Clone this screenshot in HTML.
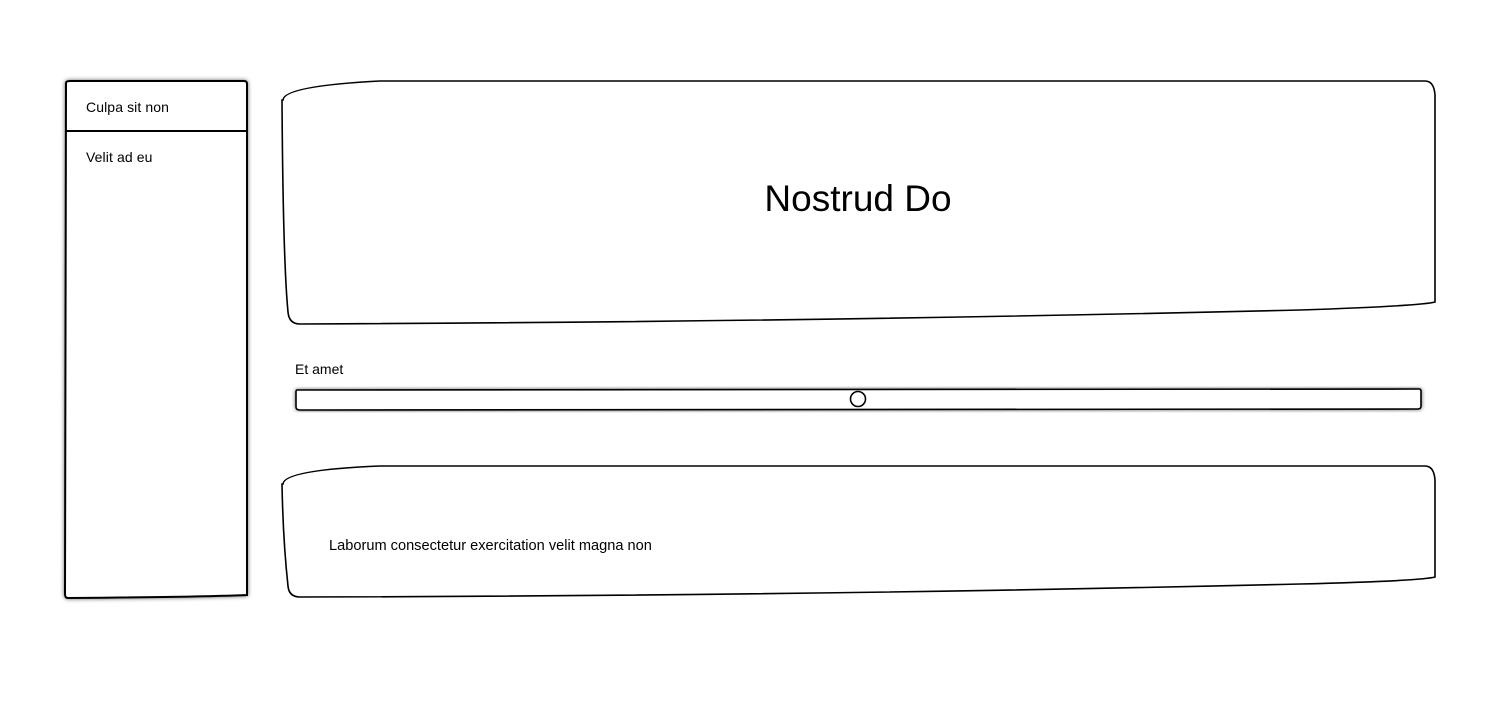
<!DOCTYPE html>
<html><head><style>
body{margin:0;width:1500px;height:720px;background:#fff;overflow:hidden;font-family:"Comic Sans MS","Liberation Sans",sans-serif;}
svg{position:absolute;left:0;top:0}
text{font-family:"Comic Sans MS","Liberation Sans",sans-serif;fill:#000}
</style></head><body>
<svg width="1500" height="720" viewBox="0 0 1500 720">
<defs><filter id="sh" x="-10%" y="-10%" width="120%" height="120%"><feGaussianBlur in="SourceAlpha" stdDeviation="2"/><feOffset dx="0" dy="0"/><feComponentTransfer><feFuncA type="linear" slope="0.6"/></feComponentTransfer><feMerge><feMergeNode/><feMergeNode in="SourceGraphic"/></feMerge></filter></defs>
<g filter="url(#sh)">
<path d="M66,83 Q66,81 70,81 L244,81 Q247,81 247,84 L247,595 Q200,597 68,598 Q65,598 65,594 Z" fill="#fff" stroke="#000" stroke-width="2"/>
</g>
<line x1="65" y1="131" x2="247" y2="131" stroke="#000" stroke-width="2"/>
<text x="86" y="112" font-size="14" letter-spacing="0.1">Culpa sit non</text>
<text x="86" y="162" font-size="14" letter-spacing="0.1">Velit ad eu</text>
<path d="M283,100 Q284,86 380,81 L1425,81 Q1434,81 1435,95 L1435,302 Q1420,306 1300,310 Q800,322 300,324 Q289,324 288,312 Q283,260 282,100 Z" fill="#fff" stroke="#000" stroke-width="1.6"/>
<text x="858" y="211" font-size="37" text-anchor="middle">Nostrud Do</text>
<text x="295" y="374" font-size="14">Et amet</text>
<g filter="url(#sh)">
<path d="M297,390 L1419,389 Q1421,389 1421,391 L1421,406 Q1421,409 1418,409 L300,410 Q296,410 296,407 L296,392 Q296,390 297,390 Z" fill="#fff" stroke="#000" stroke-width="1.6"/>
</g>
<circle cx="858" cy="399" r="7.5" fill="#fff" stroke="#000" stroke-width="1.6"/>
<path d="M283,484 Q284,470 380,466 L1425,466 Q1434,466 1435,480 L1435,577 Q1420,581 1300,584 Q800,596 300,597 Q289,597 288,586 Q283,540 282,484 Z" fill="#fff" stroke="#000" stroke-width="1.6"/>
<text x="329" y="550" font-size="14.6">Laborum consectetur exercitation velit magna non</text>
</svg>
</body></html>
